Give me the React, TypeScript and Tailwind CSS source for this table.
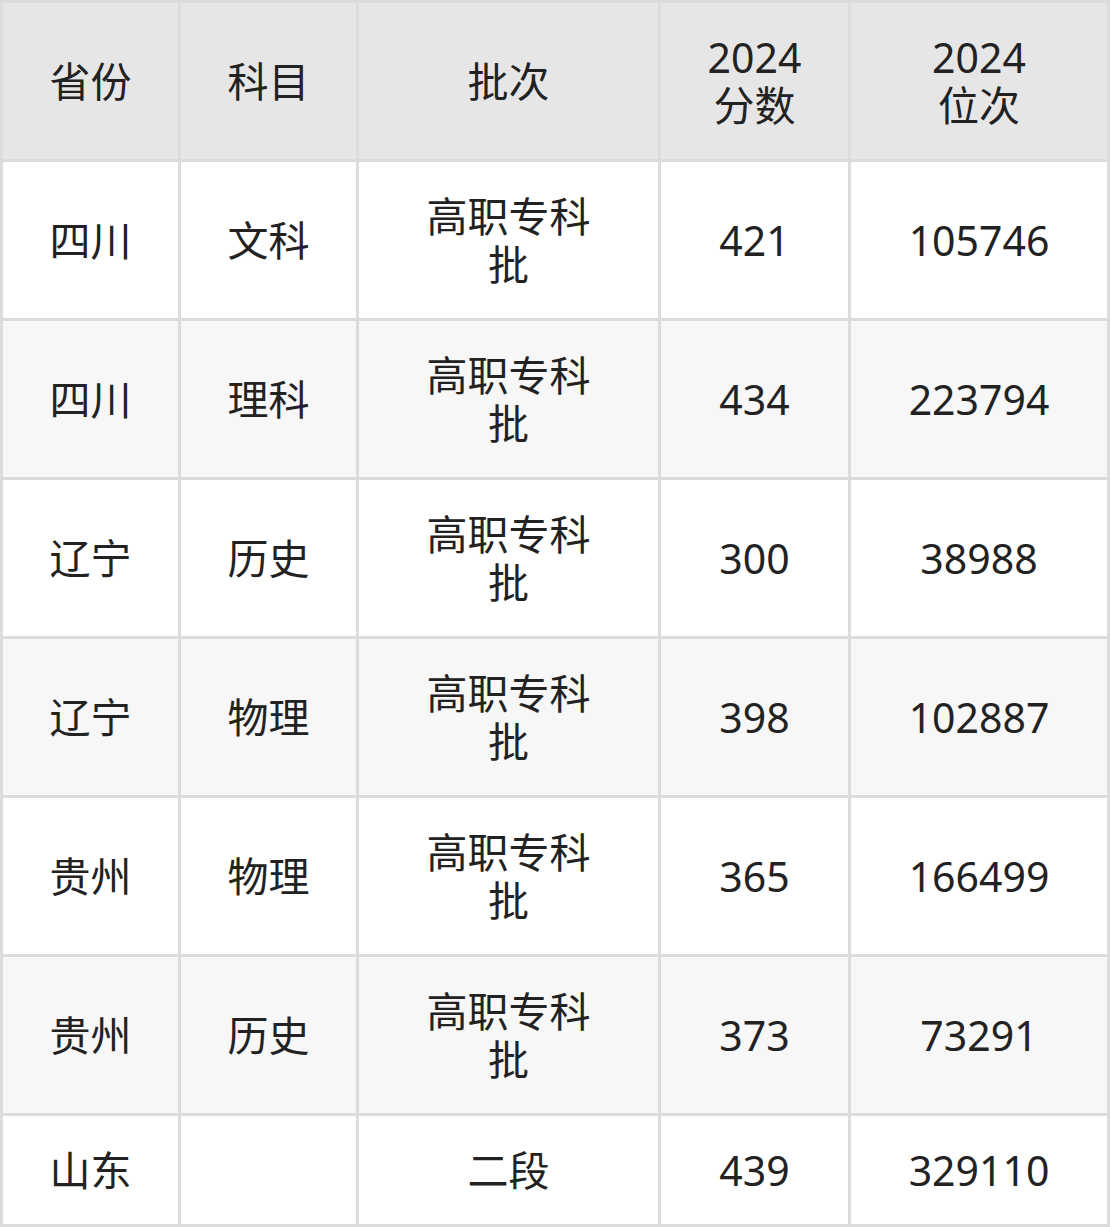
const headers: string[][] = [["省份"], ["科目"], ["批次"], ["2024", "分数"], ["2024", "位次"]];

const rows: string[][] = [
  ["四川", "文科", "高职专科批", "421", "105746"],
  ["四川", "理科", "高职专科批", "434", "223794"],
  ["辽宁", "历史", "高职专科批", "300", "38988"],
  ["辽宁", "物理", "高职专科批", "398", "102887"],
  ["贵州", "物理", "高职专科批", "365", "166499"],
  ["贵州", "历史", "高职专科批", "373", "73291"],
  ["山东", "", "二段", "439", "329110"],
];

export default function App() {
  return (
    <div
      className="w-[1110px] h-[1227px] bg-[#dcdcdc] p-[3px] text-[#222] text-[41px] leading-[48px]"
      style={{ fontFamily: '"Noto Sans", "Noto Sans CJK SC", sans-serif' }}
    >
      <div className="grid h-full grid-cols-[175px_175px_299px_187px_1fr] grid-rows-[156px_repeat(6,156px)_1fr] gap-[3px]">
        {headers.map((h, i) => (
          <div key={i} className="flex flex-col items-center justify-center bg-[#e6e6e6] text-center">
            {h.map((t) => (
              <span key={t}>{t}</span>
            ))}
          </div>
        ))}
        {rows.map((r, ri) =>
          r.map((c, ci) => (
            <div
              key={`${ri}-${ci}`}
              className={`flex items-center justify-center text-center ${
                ri % 2 === 1 ? "bg-[#f7f7f7]" : "bg-white"
              }`}
            >
              <span className={ci === 2 ? "max-w-[172px]" : ""}>{c}</span>
            </div>
          ))
        )}
      </div>
    </div>
  );
}
